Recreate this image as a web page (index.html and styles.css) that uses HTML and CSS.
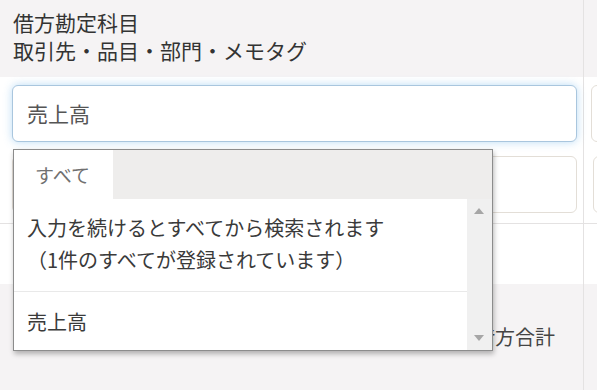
FILE: index.html
```html
<!DOCTYPE html>
<html lang="ja">
<head>
<meta charset="utf-8">
<link rel="stylesheet" href="styles.css">
</head>
<body>
<div class="sheet">
  <div class="row row-head">
    <div class="cell cell-main">
      <div class="head-line">借方勘定科目</div>
      <div class="head-line">取引先・品目・部門・メモタグ</div>
    </div>
    <div class="cell cell-side"></div>
  </div>
  <div class="row row-inputs">
    <div class="cell cell-main inputs">
      <div class="field field-focus">売上高</div>
      <div class="field"></div>
    </div>
    <div class="cell cell-side inputs-side">
      <div class="field"></div>
      <div class="field field-b"></div>
    </div>
  </div>
  <div class="row row-blank">
    <div class="cell cell-main"></div>
    <div class="cell cell-side"></div>
  </div>
  <div class="row row-total">
    <div class="cell cell-main total">借方合計</div>
    <div class="cell cell-side"></div>
  </div>

  <div class="dropdown">
    <div class="tabs">
      <div class="tab">すべて</div>
    </div>
    <div class="dd-body">
      <div class="dd-list">
        <div class="dd-item dd-note">入力を続けるとすべてから検索されます<br>（1件のすべてが登録されています）</div>
        <div class="dd-item dd-option">売上高</div>
      </div>
      <div class="dd-scroll">
        <span class="arrow arrow-up"></span>
        <span class="arrow arrow-down"></span>
      </div>
    </div>
  </div>
</div>
</body>
</html>
```

FILE: styles.css
```css
html, body {
  margin: 0;
  padding: 0;
  background: #ffffff;
}
body {
  font-family: "Noto Sans CJK JP", "Noto Sans", sans-serif;
  font-size: 20px;
  color: #333333;
  width: 597px;
  height: 390px;
  overflow: hidden;
}
.sheet {
  position: relative;
  width: 597px;
  height: 390px;
  overflow: hidden;
}
.row {
  display: flex;
}
.cell-main {
  width: 584px;
  flex: 0 0 584px;
  box-sizing: border-box;
  border-right: 1px solid #e4e2e2;
}
.cell-side {
  flex: 1 1 auto;
  min-width: 0;
  overflow: hidden;
}
.row-head {
  height: 77px;
  background: #f5f3f4;
}
.row-head .cell-main {
  padding: 8px 0 0 13px;
}
.head-line {
  line-height: 28px;
  font-size: 21px;
  color: #333;
  white-space: nowrap;
}
.row-inputs {
  height: 147px;
  border-bottom: 1px solid #e4e2e2;
  box-sizing: border-box;
}
.inputs {
  padding: 8px 6px 0 12px;
  display: flex;
  flex-direction: column;
  gap: 14px;
}
.inputs-side {
  padding: 8px 0 0 7px;
  display: flex;
  flex-direction: column;
  gap: 14px;
}
.field {
  height: 57px;
  box-sizing: border-box;
  border: 1px solid #e3ded7;
  border-radius: 6px;
  background: #fff;
  padding-left: 14px;
  line-height: 55px;
  font-size: 21px;
  color: #555;
}
.inputs-side .field {
  width: 40px;
  flex-shrink: 0;
}
.inputs-side .field-b {
  margin-left: 2px;
}
.field-focus {
  border-color: #a9c6de;
  box-shadow: 0 0 8px rgba(102, 175, 233, 0.45);
}
.row-blank {
  height: 60px;
}
.row-total {
  height: 106px;
  background: #f5f3f4;
}
.total {
  padding: 39px 0 0 475px;
  line-height: 28px;
  color: #444;
}
.dropdown {
  position: absolute;
  left: 13px;
  top: 149px;
  width: 480px;
  height: 202px;
  box-sizing: border-box;
  border: 1px solid #8c8c8c;
  background: #fff;
  box-shadow: 1px 3px 5px rgba(0, 0, 0, 0.28);
  display: flex;
  flex-direction: column;
}
.tabs {
  height: 49px;
  background: #eeedec;
  display: flex;
  flex-shrink: 0;
}
.tab {
  width: 99px;
  background: #fff;
  box-sizing: border-box;
  padding-left: 21px;
  line-height: 49px;
  font-size: 19px;
  color: #707070;
}
.dd-body {
  flex: 1;
  display: flex;
  min-height: 0;
}
.dd-list {
  flex: 1;
}
.dd-item {
  padding-left: 13px;
  line-height: 32px;
  color: #3a3a3a;
  font-size: 20px;
  white-space: nowrap;
}
.dd-note {
  padding-top: 13px;
  padding-bottom: 15px;
  border-bottom: 1px solid #e9e9e9;
}
.dd-option {
  padding-top: 14px;
}
.dd-scroll {
  width: 25px;
  background: #f0f0f0;
  position: relative;
}
.arrow {
  position: absolute;
  left: 7px;
  width: 0;
  height: 0;
  border-left: 5px solid transparent;
  border-right: 5px solid transparent;
}
.arrow-up {
  top: 9px;
  border-bottom: 6px solid #a6a6a6;
}
.arrow-down {
  bottom: 9px;
  border-top: 6px solid #a6a6a6;
}
```
